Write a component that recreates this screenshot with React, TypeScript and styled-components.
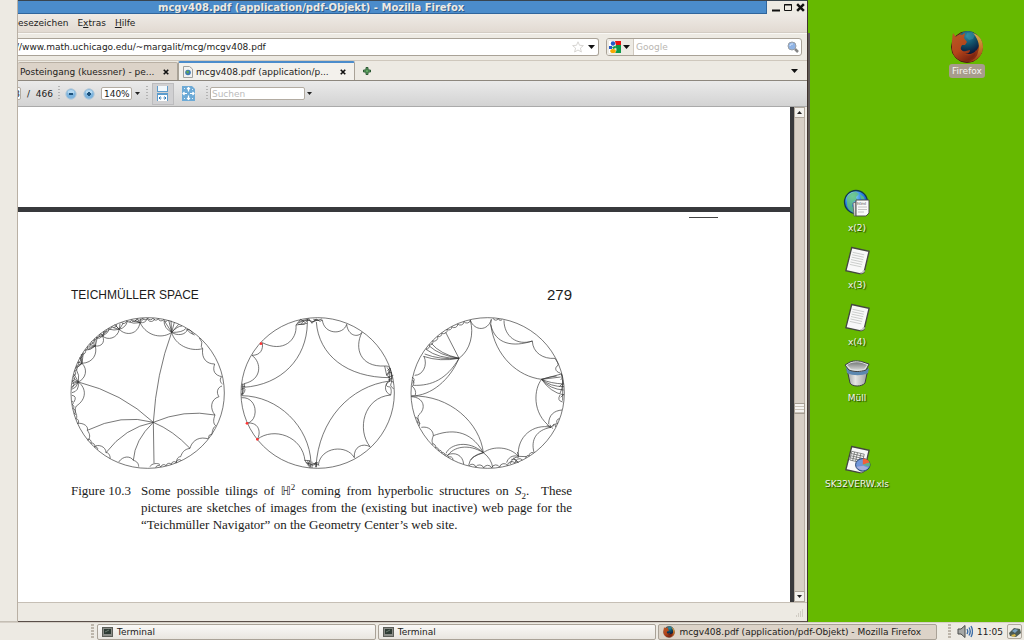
import React from 'react';
import styled, { createGlobalStyle } from 'styled-components';

const beige = '#edeae3';
const line = '#a9a297';
const dark = '#38393c';
const ink = '#1c1b1a';
const green = '#66b900';

const GlobalStyle = createGlobalStyle`
  * {
    box-sizing: border-box;
  }
  body {
    margin: 0;
    font-family: 'DejaVu Sans', Verdana, sans-serif;
    font-size: 9px;
    line-height: 12px;
    color: ${ink};
    background: ${green};
  }
  button, input {
    font: inherit;
    color: inherit;
    margin: 0;
    padding: 0;
    border: 0;
    background: none;
  }
`;

/* tilings are drawn inside an ellipse centred on 263,339; angles must increase */
const rim = (angles: number[], bulge = 1.1) =>
  angles
    .map((deg, i) => {
      const a = (deg * Math.PI) / 180;
      const x = 263 + 229 * Math.cos(a);
      const y = 339 - 225 * Math.sin(a);
      if (!i) return `M${x.toFixed(1)} ${y.toFixed(1)}`;
      const r = ((deg - angles[i - 1]) * Math.PI * 228) / 360;
      const radius = (r * bulge).toFixed(1);
      return `A${radius} ${radius} 0 0 1 ${x.toFixed(1)} ${y.toFixed(1)}`;
    })
    .join('');

interface TilingData {
  name: string;
  paths: string[];
  dots?: [number, number][];
}

const tilings: TilingData[] = [
  {
    name: 'Tiling with two long geodesics',
    paths: [
      'M280 427Q289 280 335 157M280 427Q187 339 55 306M280 427Q185 400 82 451M280 427Q195 443 138 518M280 427Q224 480 220 541M280 427L282 550M280 427Q340 452 390 505M280 427Q372 387 465 405',
      'M335 157C310 176 262 172 240 128C234 164 198 169 178 148C172 176 142 182 128 168C136 188 124 200 106 198C112 222 100 248 66 250C84 268 78 295 55 306C80 325 80 358 49 378',
      'M335 157C345 195 390 216 428 206C424 236 440 252 464 252C456 274 466 286 485 290C476 300 484 310 487 312M486 318C472 322 468 338 477 350C450 358 450 388 465 405C459 420 460 432 467 437C456 446 458 456 455 464',
      'M455 464C440 462 452 480 438 475C410 470 394 488 390 505C372 508 366 518 362 530C352 530 350 540 348 549',
      'M49 378C42 390 48 400 50 404M52 430C72 428 86 440 82 451C92 464 90 474 84 482M104 500C112 492 138 498 138 518C146 516 152 530 150 536M176 546C190 526 212 528 220 541C232 544 236 552 236 560M270 560C274 550 294 548 300 554',
      'M335 157L314 124M335 157L326 120M335 157L333 122M335 157L343 127M335 157L356 133M335 157Q352 138 366 138M335 157Q368 158 378 145M335 157C350 168 378 166 382 148C396 148 396 164 404 165M335 157Q312 145 312 122M418 174Q430 186 424 200L428 206M380 147C385 156 396 162 400 163',
      'M240 128L225 121M240 128L232 118M240 128L242 116M240 128L252 115M240 128Q256 130 262 116C268 130 282 124 284 117M240 128Q218 132 208 126M240 128Q230 124 216 124',
      'M178 148L160 143M178 148L168 138M178 148L180 131M178 148L190 129M178 148Q198 142 202 124M178 148Q160 152 150 148M178 148L164 133',
      'M128 168L116 170M128 168L122 160M128 168L132 155M128 168L140 150M128 168Q144 160 150 145M128 168Q120 178 108 174',
      'M106 198L90 194M106 198L88 202M106 198L94 184M106 198L104 176M106 198L84 208M106 198Q90 212 78 210M106 198L112 172M66 250L60 232M66 250L54 246M66 250L56 254M66 250L64 222M66 250L70 218M66 250L50 262M66 250Q50 266 46 264',
      'M55 306L42 282M55 306L40 294M55 306L37 302M55 306L36 310M55 306Q60 286 48 266M55 306L36 320M55 306Q58 334 36 338M55 306Q48 326 35 328M36 346Q52 348 42 366',
      rim([75, 78, 82, 86, 90, 94, 98, 102, 106, 110]),
      rim([114, 118, 121, 125, 129, 132, 135, 139, 142, 145, 149, 152, 156, 159, 163, 167, 171, 176]),
      rim([186, 189, 192, 196, 200, 204]),
      rim([218, 222, 226, 229]),
      rim([276, 280, 284, 288, 292, 296]),
    ],
  },
  {
    name: 'Tiling with four large sides',
    dots: [
      [93, 191],
      [51, 430],
      [82, 478],
    ],
    paths: [
      'M232 130C230 235 155 315 40 322M259 126C266 225 350 293 480 293M35 347C145 348 238 440 243 548M258 560C266 420 360 318 480 303',
      'M198 135C202 180 160 220 97 188C100 208 92 226 66 226C96 248 96 300 42 311',
      'M277 120C282 164 340 166 350 133C354 168 384 174 396 157C372 204 390 262 464 258',
      'M35 353C84 350 88 424 50 430C82 424 96 452 82 478C130 440 218 468 225 543',
      'M265 555C272 500 350 492 373 533C370 500 398 488 420 500C380 450 400 352 482 345',
      'M198 135L232 130M202 130L222 122M198 135L212 118L226 128L236 116L246 130L258 117L270 124L277 120M208 124L230 119L248 125L276 117M214 131Q222 118 240 121M232 130V116M244 127L262 119M250 118L268 122M205 133L224 133',
      'M464 258L470 286L480 293M464 258Q480 256 482 272M470 286Q474 270 486 280M472 272L480 264L486 294L476 300L490 306M474 292L490 286M476 298L488 296M478 268L478 304M484 276V306M474 305C462 318 464 338 482 345M480 304C464 310 468 322 478 320C482 322 486 330 482 345M486 306Q476 318 491 326M470 262Q484 272 472 286',
      'M36 312L44 313L42 322M34 318L46 320M38 312V346M34 328Q48 320 44 334Q42 344 33 342M36 322Q44 330 34 346',
      'M225 541L240 542L232 556M228 548L244 552L240 562M236 556L262 548L256 562M240 544V564M246 545V564M250 550L268 556M256 546L260 562M225 541Q228 552 236 552M262 546Q256 556 246 556M233 542L237 560',
    ],
  },
  {
    name: 'Tiling with fanned triangles',
    paths: [
      'M211 121C222 160 212 210 177 235C150 298 95 348 34 348M211 121C224 154 264 154 274 118M274 118L272 133C285 230 355 290 425 298',
      'M272 133C285 194 340 202 397 183C352 198 312 170 312 121M397 183C398 218 430 238 465 235C472 246 476 252 474 256C464 262 464 274 480 279',
      'M425 298L484 282M425 298L482 291M425 298Q450 290 470 288M425 298Q450 310 492 312M425 298Q450 320 492 320M425 298Q450 328 491 330M425 298Q450 336 491 345M425 298C402 325 394 400 453 442',
      'M453 442C400 430 350 470 355 529M453 442C408 450 392 480 402 517M446 432C446 405 462 392 486 390M453 442L462 432M453 442L440 436M450 434L458 446M458 440L466 430M352 516L356 530',
      'M34 348C150 344 240 430 250 518C210 446 150 448 100 467M250 518C205 478 150 492 138 520M250 518C205 490 160 500 142 528M250 518C280 496 330 500 355 529M250 518Q274 536 278 562M250 518Q210 526 206 556M250 518Q216 530 212 540',
      'M177 235L137 157M177 235Q120 222 94 190M177 235Q118 226 88 198M177 235Q115 236 78 208M177 235Q120 246 70 229M177 235Q120 240 74 222M177 235C140 298 95 318 40 316',
      'M72 229C84 256 68 286 44 286M36 318Q50 330 46 345M34 350C72 352 80 385 56 405C50 416 58 424 60 432M64 442C86 438 100 452 100 467C94 482 96 488 100 492M144 524C164 516 188 524 191 552M355 529C336 524 324 534 320 548M356 532Q340 528 330 552M340 534L356 548M334 538Q350 536 352 548M355 529L380 530',
      'M38 318Q46 308 38 300M36 292Q48 296 38 310M482 279Q492 290 482 300M484 282Q494 312 480 340M488 300V362M480 345Q470 362 488 366M482 352L492 342M486 312L478 320',
      rim([79, 82, 86]),
      rim([103, 108, 113, 118, 122, 127, 131, 136, 140, 144]),
      rim([199, 203, 206]),
      rim([223, 227, 230, 233, 236, 239, 243]),
      rim([256, 261, 267, 273, 279, 285, 291, 297]),
      rim([300, 303, 307]),
      rim([333, 336, 340]),
    ],
  },
];

const Tiling = ({ name, paths, dots = [] }: TilingData) => (
  <TilingSvg viewBox="30 108 465 462" role="img" aria-label={name}>
    <ellipse cx="263" cy="339" rx="230" ry="226" />
    {paths.map((d) => (
      <path key={d} d={d} />
    ))}
    {dots.map(([x, y]) => (
      <circle key={y} cx={x} cy={y} r="4" fill="#f33" stroke="none" />
    ))}
  </TilingSvg>
);

const FirefoxIcon = ({ size }: { size: number }) => (
  <svg width={size} height={size} viewBox="0 0 34 34" aria-hidden="true">
    <defs>
      <radialGradient id="globe" cx="45%" cy="20%" r="80%">
        <stop offset="0" stopColor="#2f86a0" />
        <stop offset="0.5" stopColor="#125068" />
        <stop offset="1" stopColor="#0a1638" />
      </radialGradient>
      <linearGradient id="fur" x1="0" y1="0" x2="0.6" y2="1">
        <stop offset="0" stopColor="#b85a26" />
        <stop offset="0.6" stopColor="#b5451a" />
        <stop offset="1" stopColor="#7c2410" />
      </linearGradient>
      <linearGradient id="tail" x1="0" y1="0" x2="0" y2="1">
        <stop offset="0" stopColor="#d8b050" />
        <stop offset="0.5" stopColor="#c47a28" />
        <stop offset="1" stopColor="#9c3a14" />
      </linearGradient>
    </defs>
    <circle cx="17" cy="17" r="15.500" fill="url(#fur)" stroke="#4a1c14" />
    <circle cx="18" cy="12.500" r="11.500" fill="url(#globe)" />
    <path d="M17 3l5-1 3 3-2 4-4 1-3-3z" fill="#3a94a6" opacity=".5" />
    <path
      d="M23 3c6 2 10 7 10 14 0 8-6 15-15 15 6-2 9-5 10-10 2-5 1-12-5-19z"
      fill="url(#tail)"
    />
    <path
      d="M3 3l3 4c2-2 4-3 6-2l3-2-1 5 3 4-2 3h-3l-1 2c-1 3 2 5 5 4l4-1c0 3-3 4-6 4 4 3 10 1 12-4 0 7-5 11-11 11C7 31 2 25 2 17c0-6 0-10 1-14z"
      fill="url(#fur)"
    />
  </svg>
);

const Sheet = () => (
  <>
    <path d="M9 1l18 4-5 21c-1 2-3 2-5 2L3 25z" fill="#f8f8f8" stroke="#44473f" strokeWidth="1.400" />
    <path d="M17 28c3-1 3-3 4-4l2 1c-1 2-3 3-6 3z" fill="#c4c6c2" />
  </>
);

const PageIcon = () => (
  <svg width="28" height="30" viewBox="0 0 29 30" aria-hidden="true">
    <Sheet />
    <path
      d="M10 6l12 2.600M9.500 8.500l12 2.600M9 11l12 2.600M8.300 13.500l12 2.600M7.700 16l12 2.600M7 18.500l12 2.600"
      stroke="#c4c6c4"
      strokeWidth=".9"
    />
  </svg>
);

const HtmlIcon = () => (
  <svg width="28" height="30" viewBox="0 0 28 30" aria-hidden="true">
    <defs>
      <radialGradient id="earth" cx="35%" cy="25%" r="75%">
        <stop offset="0" stopColor="#b6f0f0" />
        <stop offset="0.5" stopColor="#2f8be6" />
        <stop offset="1" stopColor="#0b3fc8" />
      </radialGradient>
    </defs>
    <circle cx="13" cy="13" r="11.500" fill="url(#earth)" stroke="#123a4a" strokeWidth="1.300" />
    <path d="M4 8c3-4 6-5 9-5l3 2-3 3 1 3-4 2-1 4 3 3-1 4c-5-2-7-5-7-9zM17 5l4 3 1 3-4-1z" fill="#62c07c" opacity=".8" />
    <path d="M10 14l3-1v14h-2z" fill="#ddd" stroke="#555" strokeWidth=".7" />
    <path d="M13 11h13v13l-3 3H13z" fill="#fafafa" stroke="#4c4f4c" />
    <path d="M15 18h9M15 20.500h9M15 23h6" stroke="#b5b5b5" strokeWidth=".8" />
    <text x="14" y="16" fontSize="4" fontFamily="DejaVu Sans, sans-serif" fill="#333">
      html
    </text>
  </svg>
);

const TrashIcon = () => (
  <svg width="28" height="30" viewBox="0 0 28 30" aria-hidden="true">
    <defs>
      <linearGradient id="tin">
        <stop offset="0" stopColor="#9a9ea0" />
        <stop offset="0.4" stopColor="#e6e6e4" />
        <stop offset="1" stopColor="#989c9c" />
      </linearGradient>
      <linearGradient id="inside" x1="0" y1="0" x2="0" y2="1">
        <stop offset="0" stopColor="#777b7b" />
        <stop offset="1" stopColor="#d2d4d2" />
      </linearGradient>
    </defs>
    <path d="M4 10l3 14c2 4 12 4 15 0l3-14z" fill="url(#tin)" stroke="#3d4042" />
    <path d="M3 8c6 6 17 6 23 1l-1 5c-6 3-15 3-21 0z" fill="#5c88b0" />
    <path d="M2 6l5-3c5-2 10-1 13 0l6 2-3 6c-6 2-12 2-17 0z" fill="#dfe2e2" stroke="#3d4042" />
    <path d="M4 6l4-2c4-1 8-1 11 0l5 2-3 4c-4 1-9 1-13 0z" fill="url(#inside)" />
  </svg>
);

const SpreadsheetIcon = () => (
  <svg width="28" height="30" viewBox="0 0 29 30" aria-hidden="true">
    <Sheet />
    <path
      d="M9 6l13 3-2 9-13-3zM8.500 8.300l13 3M8 10.600l13 3M7.500 12.800l13 3M12 6.800l-2 9M15 7.500l-2 9M18.500 8.300l-2 9"
      fill="none"
      stroke="#666a66"
      strokeWidth=".8"
    />
    <ellipse cx="20.500" cy="20" rx="7.500" ry="6.500" fill="#6f96d8" stroke="#27406e" />
    <path d="M20.500 20v-6.500c4 0 6 2 7 4z" fill="#f2603a" />
    <path d="M20.500 20l7-2.500c.6 2 .5 3-.2 4.500z" fill="#5fb38a" />
    <path d="M14 22c3 4 9 5 12 1l-5-2z" fill="#a5aede" />
  </svg>
);

const Caret = () => (
  <svg width="7" height="4" viewBox="0 0 7 4" aria-hidden="true">
    <path d="M0 0h7L3.500 4z" fill="#111" />
  </svg>
);

const SmallCaret = () => (
  <svg width="5" height="3" viewBox="0 0 5 3" aria-hidden="true">
    <path d="M0 0h5L2.500 3z" fill="#222" />
  </svg>
);

const CloseIcon = ({ size }: { size: number }) => (
  <svg width={size} height={size} viewBox="0 0 8 8" aria-hidden="true">
    <path d="M1 1l6 6M7 1L1 7" stroke="#111" strokeWidth="2.200" />
  </svg>
);

const ZoomIcon = ({ plus }: { plus?: boolean }) => (
  <svg width="12" height="12" viewBox="0 0 12 12" aria-hidden="true">
    <circle cx="6" cy="6" r="5.200" fill="#7db4de" stroke="#b4c9d8" />
    <ellipse cx="6" cy="4" rx="3.500" ry="2" fill="#b4d8f0" />
    <path d={plus ? 'M4 6h4M6 4v4' : 'M4 6h4'} stroke="#1c527c" strokeWidth="2" />
  </svg>
);

const FitWidthIcon = () => (
  <svg width="13" height="15" viewBox="0 0 13 15" aria-hidden="true">
    <path d="M1 0h11v6H1z" fill="#5d9ccc" />
    <path d="M2 0h9v5H2z" fill="#f2f8fc" />
    <path d="M1 7h11v8H1z" fill="#5d9ccc" />
    <path d="M2 9h9v6H2z" fill="#fff" />
    <path d="M3 12h2.500M7.500 12H10M4.500 10.500L3 12l1.500 1.500M8.500 10.500L10 12l-1.500 1.500" fill="none" stroke="#2f78b4" />
  </svg>
);

const FitPageIcon = () => (
  <svg width="13" height="15" viewBox="0 0 13 15" aria-hidden="true">
    <path d="M0 0h10l3 3v12H0z" fill="#6daad6" />
    <path
      d="M6.500 1.500v4M5 3l1.500-1.500L8 3M6.500 13.500v-4M5 12l1.500 1.500L8 12M1 7.500h4M2.500 6L1 7.500 2.500 9M12 7.500H8M10.500 6L12 7.500 10.500 9"
      fill="none"
      stroke="#fff"
      strokeWidth="1.200"
    />
    <path d="M2 2l1 1M11 3l-1 1M2 13l1-1M11 13l-1-1" stroke="#e2f0fa" />
  </svg>
);

const GoogleIcon = () => (
  <svg width="12" height="12" viewBox="0 0 12 12" aria-hidden="true">
    <path d="M0 0h6v12H0z" fill="#fff" />
    <path d="M6 0h6v4H7z" fill="#e8130f" />
    <path d="M7 4h5v8H6c2-2 2-5 0-6z" fill="#0d9a48" />
    <circle cx="4" cy="2.500" r="2.200" fill="#2459c8" />
    <path d="M0 5h3v3H0z" fill="#2459c8" />
    <path d="M3 6l3-1 1 2-3 1z" fill="#0d9a48" />
    <ellipse cx="4" cy="10" rx="2.800" ry="2" fill="#f5a800" />
  </svg>
);

const SearchIcon = () => (
  <svg width="12" height="12" viewBox="0 0 12 12" aria-hidden="true">
    <path d="M8 8l3 3" stroke="#858585" strokeWidth="2.500" />
    <circle cx="5" cy="5" r="4" fill="#8fb3e4" stroke="#9a9fa5" />
    <path d="M3 5c0-2 2-2 3-2" fill="none" stroke="#dbe8fa" />
  </svg>
);

const StarIcon = () => (
  <svg width="12" height="12" viewBox="0 0 12 12" aria-hidden="true">
    <path
      d="M6 .8l1.500 3.500 3.900.3-3 2.500 1 3.900L6 9l-3.400 2 1-3.900-3-2.500 3.900-.3z"
      fill="#fff"
      stroke="#d8d6d3"
    />
  </svg>
);

const PlusIcon = () => (
  <svg width="8" height="8" viewBox="0 0 8 8" aria-hidden="true">
    <path d="M3 .5h2V3h2.500v2H5v2.500H3V5H.5V3H3z" fill="#62a864" stroke="#2c5a35" />
  </svg>
);

const FaviconIcon = () => (
  <svg width="10" height="12" viewBox="0 0 10 12" aria-hidden="true">
    <path d="M.5.500h6L9.500 3v8.500h-9z" fill="#f2f2f0" stroke="#a0a09c" />
    <circle cx="5" cy="6.500" r="2.800" fill="#3c78b4" />
    <path d="M3 6c1-2 3-1 3 0L5 8z" fill="#62a850" />
  </svg>
);

const TerminalIcon = () => (
  <svg width="11" height="10" viewBox="0 0 11 10" aria-hidden="true">
    <rect x=".5" y=".5" width="10" height="9" fill="#8b8d88" stroke="#5c5e58" />
    <rect x="2" y="2" width="7" height="5" fill="#2e3b34" />
    <path d="M3 5l4-2" stroke="#6c7c70" />
  </svg>
);

const SpeakerIcon = () => (
  <svg width="16" height="13" viewBox="0 0 16 13" aria-hidden="true">
    <path d="M1 4h3l4-3.500v12L4 9H1z" fill="#a6a8a6" stroke="#4a4c4a" />
    <path d="M10 4q1.500 2.500 0 5M12 2.500q2.500 4 0 8M14 1q3 5.500 0 11" fill="none" stroke="#3d6ea8" strokeWidth="1.400" />
  </svg>
);

const TrayIcon = () => (
  <svg width="12" height="10" viewBox="0 0 12 10" aria-hidden="true">
    <path d="M0 6l5-5 6 1 1 4-5 4-6-1z" fill="#4c5a55" />
    <path d="M3 4l3-2 3 1-3 3z" fill="#7ba2c4" />
    <path d="M2 8l4-1 1 2-3 1z" fill="#d6b54a" />
  </svg>
);

const windowTitle = 'mcgv408.pdf (application/pdf-Objekt) - Mozilla Firefox';

const desktopItems = [
  { label: 'Firefox', x: 119, y: 30, icon: <FirefoxIcon size={34} />, selected: true },
  { label: 'x(2)', x: 9, y: 189, icon: <HtmlIcon /> },
  { label: 'x(3)', x: 9, y: 246, icon: <PageIcon /> },
  { label: 'x(4)', x: 9, y: 303, icon: <PageIcon /> },
  { label: 'Müll', x: 9, y: 359, icon: <TrashIcon /> },
  { label: 'SK32VERW.xls', x: 9, y: 445, icon: <SpreadsheetIcon /> },
];

const App: React.FunctionComponent = () => (
  <Screen>
    <GlobalStyle />
    <Workspace>
      <SidePanel />
      <Window>
        <TitleBar>
          <Title>{windowTitle}</Title>
          <WindowButtons>
            <button aria-label="Minimize">
              <svg width="8" height="9" viewBox="0 0 8 9">
                <path d="M0 7.500h8" stroke="#111" strokeWidth="2" />
              </svg>
            </button>
            <button aria-label="Maximize">
              <svg width="8" height="9" viewBox="0 0 8 9">
                <path d="M.5 1.500h7v6h-7zM0 2h8" fill="none" stroke="#111" />
              </svg>
            </button>
            <button aria-label="Close">
              <CloseIcon size={9} />
            </button>
          </WindowButtons>
        </TitleBar>
        <MenuBar>
          <MenuItem>esezeichen</MenuItem>
          <MenuItem>
            E<u>x</u>tras
          </MenuItem>
          <MenuItem>
            <u>H</u>ilfe
          </MenuItem>
        </MenuBar>
        <NavBar>
          <UrlField>
            <UrlInput
              aria-label="Address"
              defaultValue="//www.math.uchicago.edu/~margalit/mcg/mcgv408.pdf"
            />
            <IconButton aria-label="Bookmark">
              <StarIcon />
            </IconButton>
            <IconButton aria-label="History">
              <Caret />
            </IconButton>
          </UrlField>
          <SearchField>
            <EngineButton aria-label="Search engine">
              <GoogleIcon />
              <Caret />
            </EngineButton>
            <SearchInput aria-label="Search" placeholder="Google" />
            <IconButton aria-label="Go">
              <SearchIcon />
            </IconButton>
          </SearchField>
        </NavBar>
        <TabBar>
          <Tab>
            <TabTitle>Posteingang (kuessner) - pe...</TabTitle>
            <IconButton aria-label="Close tab">
              <CloseIcon size={6} />
            </IconButton>
          </Tab>
          <Tab $active>
            <FaviconIcon />
            <TabTitle>mcgv408.pdf (application/p...</TabTitle>
            <IconButton aria-label="Close tab">
              <CloseIcon size={6} />
            </IconButton>
          </Tab>
          <NewTab aria-label="New tab">
            <PlusIcon />
          </NewTab>
          <TabList aria-label="All tabs">
            <Caret />
          </TabList>
        </TabBar>
        <PdfBar>
          <PageInput aria-label="Page" defaultValue="293" />
          <PageCount>/&nbsp; 466</PageCount>
          <Grip />
          <ZoomButtons>
            <IconButton aria-label="Zoom out">
              <ZoomIcon />
            </IconButton>
            <IconButton aria-label="Zoom in">
              <ZoomIcon plus />
            </IconButton>
          </ZoomButtons>
          <ZoomInput aria-label="Zoom" defaultValue="140%" />
          <IconButton aria-label="Zoom levels">
            <SmallCaret />
          </IconButton>
          <Grip $wide />
          <FitButton $active aria-label="Fit width">
            <FitWidthIcon />
          </FitButton>
          <FitButton aria-label="Fit page">
            <FitPageIcon />
          </FitButton>
          <Grip $wide />
          <FindInput aria-label="Find" placeholder="Suchen" />
          <IconButton aria-label="Find options">
            <SmallCaret />
          </IconButton>
        </PdfBar>
        <Viewer>
          <Pages>
            <PreviousPage />
            <Page>
              <HeaderRule />
              <Column>
                <RunningHead>
                  <span>TEICHMÜLLER SPACE</span>
                  <Folio>279</Folio>
                </RunningHead>
                <Figures>
                  {tilings.map((tiling) => (
                    <Tiling key={tiling.name} {...tiling} />
                  ))}
                </Figures>
                <Caption>
                  <CaptionLabel>Figure 10.3</CaptionLabel>
                  <CaptionText>
                    <CaptionLine $justified>
                      Some possible tilings of <Blackboard>ℍ</Blackboard>
                      <sup>2</sup> coming from hyperbolic structures on <i>S</i>
                      <sub>2</sub>.&nbsp; These
                    </CaptionLine>
                    <CaptionLine $justified>
                      pictures are sketches of images from the (existing but inactive) web page
                      for the
                    </CaptionLine>
                    <CaptionLine>
                      “Teichmüller Navigator” on the Geometry Center’s web site.
                    </CaptionLine>
                  </CaptionText>
                </Caption>
              </Column>
            </Page>
          </Pages>
          <Scrollbar>
            <ScrollButton aria-label="Scroll up">
              <Flipped>
                <SmallCaret />
              </Flipped>
            </ScrollButton>
            <Track $share={286} />
            <Thumb />
            <Track $share={178} />
            <ScrollButton aria-label="Scroll down">
              <SmallCaret />
            </ScrollButton>
          </Scrollbar>
        </Viewer>
        <StatusBar>
          <svg width="9" height="9" viewBox="0 0 9 9" aria-hidden="true">
            <path
              d="M7 1h1M5 3h1M7 3h1M3 5h1M5 5h1M7 5h1M1 7h1M3 7h1M5 7h1M7 7h1"
              stroke="#b5afa5"
            />
          </svg>
        </StatusBar>
      </Window>
      <Desktop>
        <WindowEdge />
        {desktopItems.map(({ label, x, y, icon, selected }) => (
          <DesktopItem key={label} $x={x} $y={y}>
            {icon}
            <DesktopLabel $selected={selected}>{label}</DesktopLabel>
          </DesktopItem>
        ))}
      </Desktop>
    </Workspace>
    <Taskbar>
      <TaskGrip />
      <Tasks>
        <Task>
          <TerminalIcon />
          Terminal
        </Task>
        <Task>
          <TerminalIcon />
          Terminal
        </Task>
        <Task $active>
          <FirefoxIcon size={12} />
          {windowTitle}
        </Task>
      </Tasks>
      <TaskGrip />
      <Tray>
        <SpeakerIcon />
        <span>11:05</span>
        <TrayButton aria-label="Input device">
          <TrayIcon />
        </TrayButton>
      </Tray>
    </Taskbar>
  </Screen>
);

const Screen = styled.div`
  display: flex;
  flex-direction: column;
  height: 100vh;
  overflow: hidden;
`;

const Workspace = styled.div`
  display: flex;
  flex: 1;
  min-height: 0;
`;

const SidePanel = styled.div`
  width: 18px;
  background: ${beige};
  border-right: 1px solid #b9b0a4;
  border-bottom: 1px solid #c4beb4;
`;

const Window = styled.main`
  display: flex;
  flex: 1;
  flex-direction: column;
  min-width: 0;
  background: ${beige};
  border-top: 1px solid #38444f;
  border-right: 1px solid #40332e;
  border-bottom: 1px solid #5a4f49;
`;

const TitleBar = styled.div`
  display: flex;
  height: 13px;
`;

const Title = styled.div`
  flex: 1;
  padding-left: 140px;
  background: #4b8ccb;
  border-right: 1px solid #30659c;
  border-bottom: 1px solid #30659c;
  color: ${beige};
  font-size: 10px;
  font-weight: bold;
  line-height: 13px;
  white-space: nowrap;
  text-shadow: 1px 1px #2b5c8e;
`;

const WindowButtons = styled.div`
  display: flex;
  align-items: center;
  gap: 4px;
  padding: 0 2px 0 5px;

  button {
    display: flex;
  }
`;

const MenuBar = styled.nav`
  display: flex;
  align-items: center;
  gap: 9px;
  height: 19px;
  background: linear-gradient(#eeeae5, #e2dad2);
  border-bottom: 1px solid #d3ccc3;
`;

const MenuItem = styled.button`
  white-space: nowrap;
`;

const NavBar = styled.div`
  display: flex;
  align-items: center;
  gap: 7px;
  height: 28px;
  padding-right: 5px;
  border-top: 1px solid #f9f8f5;
  border-bottom: 1px solid #cfc8bd;
`;

const UrlField = styled.div`
  display: flex;
  flex: 1;
  align-items: center;
  gap: 4px;
  height: 18px;
  padding-right: 3px;
  background: #fff;
  border: 1px solid ${line};
  border-left: 0;
  border-radius: 0 3px 3px 0;
`;

const UrlInput = styled.input`
  flex: 1;
  min-width: 0;
  text-indent: -2px;
`;

const IconButton = styled.button`
  display: flex;
  align-items: center;
  justify-content: center;
`;

const SearchField = styled.div`
  display: flex;
  align-items: center;
  width: 196px;
  height: 18px;
  padding-right: 2px;
  background: #fff;
  border: 1px solid ${line};
  border-radius: 3px;
  overflow: hidden;
`;

const EngineButton = styled.button`
  display: flex;
  align-items: center;
  gap: 2px;
  height: 100%;
  padding: 0 3px 0 2px;
  background: ${beige};
  border-right: 1px solid #d0c9bf;
`;

const SearchInput = styled.input`
  flex: 1;
  min-width: 0;
  padding-left: 2px;

  &::placeholder {
    color: #b9b6b1;
  }
`;

const TabBar = styled.div`
  display: flex;
  align-items: flex-end;
  height: 20px;
  padding-right: 9px;
  border-bottom: 1px solid #8d877e;
`;

const Tab = styled.div<{ $active?: boolean }>`
  display: flex;
  align-items: center;
  gap: 3px;
  width: ${({ $active }) => ($active ? 177 : 160)}px;
  height: ${({ $active }) => ($active ? 19 : 18)}px;
  padding: 0 8px 0 ${({ $active }) => ($active ? 4 : 2)}px;
  background: ${({ $active }) => ($active ? '#f3f1ec' : '#dcd3c8')};
  border: 1px solid ${line};
  border-top: ${({ $active }) => ($active ? '2px solid #4b8ccb' : '1px solid #b9b0a4')};
  border-bottom: 0;
  border-left-width: ${({ $active }) => ($active ? 1 : 0)}px;
  border-radius: 2px 2px 0 0;
`;

const TabTitle = styled.span`
  flex: 1;
  white-space: nowrap;
`;

const NewTab = styled.button`
  align-self: center;
  display: flex;
  margin-left: 8px;
`;

const TabList = styled.button`
  align-self: center;
  display: flex;
  margin-left: auto;
`;

const PdfBar = styled.div`
  display: flex;
  align-items: center;
  height: 26px;
  background: linear-gradient(#eaeaea, #d3d3d3);
  border-bottom: 1px solid #aaa;
  overflow: hidden;
`;

const fieldBorder = '1px solid #b3aca2';

const PageInput = styled.input`
  width: 24px;
  height: 13px;
  margin-left: -21px;
  background: #fff;
  border: ${fieldBorder};
  border-radius: 2px;
  text-align: right;
`;

const PageCount = styled.span`
  padding: 0 5px 0 6px;
  white-space: nowrap;
`;

const Grip = styled.div<{ $wide?: boolean }>`
  width: 2px;
  height: 15px;
  margin-left: ${({ $wide }) => ($wide ? 6 : 0)}px;
  background: repeating-linear-gradient(#b3b3b3 0 1px, transparent 1px 3px);
`;

const ZoomButtons = styled.div`
  display: flex;
  gap: 6px;
  padding: 0 6px 0 5px;
`;

const ZoomInput = styled.input`
  width: 31px;
  height: 13px;
  margin-right: 3px;
  padding-left: 2px;
  background: #fff;
  border: ${fieldBorder};
  border-radius: 2px;
`;

const FitButton = styled.button<{ $active?: boolean }>`
  display: flex;
  align-items: center;
  justify-content: center;
  width: 22px;
  height: 22px;
  margin-left: 4px;
  background: ${({ $active }) => ($active ? '#d0d0d2' : 'none')};
  border: 1px solid ${({ $active }) => ($active ? '#bcbcbe' : 'transparent')};
`;

const FindInput = styled.input`
  width: 95px;
  height: 13px;
  margin: 0 2px;
  padding-left: 1px;
  background: #fff;
  border: ${fieldBorder};
  border-radius: 2px;

  &::placeholder {
    color: #bbb;
  }
`;

const Viewer = styled.div`
  display: flex;
  flex: 1;
  min-height: 0;
  padding-right: 2px;
`;

const Pages = styled.div`
  flex: 1;
  min-width: 0;
  background: #fff;
  border-right: 4px solid ${dark};
  overflow: hidden;
`;

const PreviousPage = styled.div`
  height: 100px;
`;

const Page = styled.article`
  border-top: 5px solid ${dark};
`;

const HeaderRule = styled.div`
  width: 29px;
  height: 1px;
  margin: 5px 72px 0 auto;
  background: #444;
`;

const Column = styled.div`
  width: 501px;
  margin: 68px 0 0 53px;
`;

const RunningHead = styled.header`
  display: flex;
  align-items: center;
  justify-content: space-between;
  height: 18px;
  font-family: 'Liberation Sans', Arial, sans-serif;
  font-size: 12px;
`;

const Folio = styled.span`
  font-size: 15px;
`;

const Figures = styled.div`
  display: flex;
  gap: 15px;
  margin: 12px 0 12px -1px;
`;

const TilingSvg = styled.svg`
  flex: none;
  width: 155px;
  height: 154px;
  fill: none;
  stroke: #333;
  stroke-width: 2;
`;

const Caption = styled.div`
  display: flex;
  font-family: 'Liberation Serif', 'Times New Roman', serif;
  font-size: 13px;
  line-height: 17px;
`;

const CaptionLabel = styled.span`
  width: 70px;
  white-space: nowrap;
`;

const CaptionText = styled.p`
  flex: 1;
  margin: 0;

  sup, sub {
    font-size: 9px;
    line-height: 0;
  }
`;

const CaptionLine = styled.span<{ $justified?: boolean }>`
  display: block;
  text-align-last: ${({ $justified }) => ($justified ? 'justify' : 'left')};
`;

const Blackboard = styled.span`
  font-family: 'DejaVu Sans', sans-serif;
  font-size: 12px;
  line-height: 0;
`;

const Scrollbar = styled.div`
  display: flex;
  flex-direction: column;
  width: 11px;
`;

const ScrollButton = styled.button`
  display: flex;
  align-items: center;
  justify-content: center;
  height: 11px;
  background: #f3f1ed;
  border: 1px solid #b0a89d;
`;

const Flipped = styled.span`
  display: flex;
  transform: rotate(180deg);
`;

const Track = styled.div<{ $share: number }>`
  flex: ${({ $share }) => $share} 1 0;
  background: #d8d0c6;
  border: solid #b9b0a5;
  border-width: 0 1px;
`;

const Thumb = styled.div`
  height: 11px;
  background: repeating-linear-gradient(#f5f3f0 0 2px, #c9c2b8 2px 3px);
  border: 1px solid #a59d92;
`;

const StatusBar = styled.footer`
  display: flex;
  align-items: center;
  justify-content: flex-end;
  height: 19px;
  padding: 3px 3px 0 0;
  border-top: 1px solid #c6bfb5;
`;

const Desktop = styled.section`
  position: relative;
  width: 216px;
  background: ${green};
`;

const WindowEdge = styled.div`
  position: absolute;
  top: 33px;
  left: 0;
  width: 2px;
  height: 497px;
  background: #5f5a54;
`;

const DesktopItem = styled.div<{ $x: number; $y: number }>`
  position: absolute;
  left: ${({ $x }) => $x}px;
  top: ${({ $y }) => $y}px;
  display: flex;
  flex-direction: column;
  align-items: center;
  width: 80px;
`;

const DesktopLabel = styled.span<{ $selected?: boolean }>`
  margin-top: ${({ $selected }) => ($selected ? 0 : 2)}px;
  padding: 1px 3px;
  background: ${({ $selected }) => ($selected ? '#a89c8c' : 'none')};
  border-radius: 3px;
  color: #f4f4f0;
  text-shadow: ${({ $selected }) => ($selected ? 'none' : '1px 1px 1px #1d3600')};
  white-space: nowrap;
`;

const Taskbar = styled.footer`
  display: flex;
  align-items: center;
  gap: 3px;
  height: 18px;
  padding: 0 2px 0 91px;
  background: ${beige};
  border-top: 1px solid #d5cfc6;
`;

const TaskGrip = styled.div`
  width: 3px;
  height: 15px;
  background: repeating-linear-gradient(#bdb6ab 0 2px, transparent 2px 3px);
`;

const Tasks = styled.div`
  display: flex;
  flex: 1;
  gap: 2px;
  min-width: 0;
  margin-right: 8px;
`;

const Task = styled.button<{ $active?: boolean }>`
  display: flex;
  flex: 1 1 0;
  align-items: center;
  gap: 4px;
  min-width: 0;
  height: 16px;
  padding: 0 4px;
  background: ${({ $active }) => ($active ? '#dcd3c8' : 'linear-gradient(#f9f8f6, #e9e6e0)')};
  border: 1px solid ${line};
  border-radius: 2px;
  white-space: nowrap;
`;

const Tray = styled.div`
  display: flex;
  align-items: center;
  gap: 4px;
  margin-left: 3px;
`;

const TrayButton = styled.button`
  display: flex;
  align-items: center;
  justify-content: center;
  width: 15px;
  height: 15px;
  border: 1px solid #b0a89d;
  border-radius: 2px;
`;

export default App;
